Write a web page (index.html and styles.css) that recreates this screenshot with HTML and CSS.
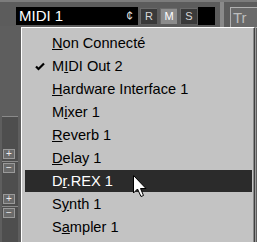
FILE: index.html
```html
<!DOCTYPE html>
<html>
<head>
<meta charset="utf-8">
<link rel="stylesheet" href="styles.css">
</head>
<body>
<div class="screen">
  <div class="edge"></div>
  <div class="rule"></div>
  <div class="main">
    <div class="topbar">
      <div class="field">MIDI 1</div>
      <div class="cent">¢</div>
      <div class="tbtn">R</div>
      <div class="tbtn on">M</div>
      <div class="tbtn">S</div>
      <div class="blk"></div>
      <div class="sep"></div>
      <div class="trbtn">Tr</div>
    </div>
    <div class="body">
      <div class="side">
        <div class="side-top"></div>
        <div class="row first">
          <div class="pm">+</div>
        </div>
        <div class="row">
          <div class="pm">−</div>
          <div class="pm">+</div>
        </div>
        <div class="row">
          <div class="pm">−</div>
          <div class="end"></div>
        </div>
      </div>
    </div>
  </div>

  <div class="menu">
    <div class="item"><span class="u">N</span>on Connecté</div>
    <div class="item"><svg class="check" width="10" height="9" viewBox="0 0 10 9"><path d="M1 4.5 L3.5 7 L9 1.5" fill="none" stroke="#000" stroke-width="2.2"/></svg>M<span class="u">I</span>DI Out 2</div>
    <div class="item"><span class="u">H</span>ardware Interface 1</div>
    <div class="item">M<span class="u">i</span>xer 1</div>
    <div class="item"><span class="u">R</span>everb 1</div>
    <div class="item"><span class="u">D</span>elay 1</div>
    <div class="item sel">D<span class="u">r</span>.REX 1</div>
    <div class="item">S<span class="u">y</span>nth 1</div>
    <div class="item">S<span class="u">a</span>mpler 1</div>
  </div>

  <svg class="cursor" width="15" height="25" viewBox="0 0 15 25">
    <path d="M0.5 0.5 L0.5 18 L4.5 14 L8 21.5 L10.5 20.5 L7.5 13.5 L13 13.5 Z" fill="#fff" stroke="#000" stroke-width="1"/>
  </svg>
</div>
</body>
</html>
```

FILE: styles.css
```css
html, body {
  margin: 0;
  padding: 0;
  background: #5e5e5e;
}
.screen {
  position: relative;
  width: 257px;
  height: 242px;
  overflow: hidden;
  display: flex;
  background: #5e5e5e;
  font-family: "Liberation Sans", Arial, sans-serif;
}
.edge {
  width: 3px;
  background: #7a7a7a;
}
.rule {
  width: 2px;
  background: #151515;
}
.main {
  flex: 1;
  display: flex;
  flex-direction: column;
}
.topbar {
  height: 26px;
  padding-top: 5px;
  box-sizing: border-box;
  display: flex;
  align-items: flex-start;
  border-top: 2px solid #7c7c7c;
  background: #5c5c5c;
}
.field {
  margin-left: 16px;
  width: 105px;
  height: 18px;
  background: #000;
  color: #fff;
  font-size: 15px;
  line-height: 18px;
  padding-left: 3px;
  box-sizing: border-box;
}
.cent {
  width: 17px;
  height: 18px;
  background: #000;
  color: #ddd;
  font-size: 12px;
  line-height: 18px;
  text-align: center;
}
.tbtn {
  width: 16px;
  height: 15px;
  margin: 1px 1px 0 2px;
  background: #3a3a3a;
  color: #d8d8d8;
  font-size: 11px;
  line-height: 15px;
  text-align: center;
  border-top: 1px solid #6a6a6a;
  border-left: 1px solid #6a6a6a;
}
.tbtn.on {
  background: #8c8c8c;
  color: #fff;
}
.blk {
  width: 17px;
  height: 18px;
  background: #000;
}
.sep {
  width: 4px;
  height: 26px;
  margin: -5px 5px 0 5px;
  background: #8a8a8a;
}
.trbtn {
  margin-left: 1px;
  width: 30px;
  height: 19px;
  border: 1px solid #b0b0b0;
  background: #6a6a6a;
  color: #bdbdbd;
  font-size: 15px;
  line-height: 19px;
  padding-left: 2px;
}
.body {
  flex: 1;
  display: flex;
}
.side {
  width: 16px;
  margin-left: 2px;
  display: flex;
  flex-direction: column;
}
.side-top {
  height: 90px;
}
.row {
  height: 45px;
  border-top: 1px solid #8a8a8a;
  background: #4e4e4e;
  display: flex;
  flex-direction: column;
  justify-content: space-between;
  padding: 1px 0 2px 0;
  box-sizing: border-box;
}
.row.first {
  justify-content: flex-end;
}
.pm {
  width: 10px;
  height: 8px;
  margin-left: 1px;
  background: #6a6a6a;
  border: 1px solid #9a9a9a;
  color: #eee;
  font-size: 10px;
  line-height: 8px;
  text-align: center;
}
.end {
  height: 4px;
  background: #000;
  margin-bottom: -2px;
}
.menu {
  position: absolute;
  left: 21px;
  top: 27px;
  width: 234px;
  height: 230px;
  background: #c3c3c3;
  border-top: 1px solid #fff;
  border-left: 1px solid #fff;
  border-right: 1px solid #404040;
  box-shadow: inset -1px 0 0 #8a8a8a, 1px 0 0 #9a9a9a;
  padding: 4px 2px 0 3px;
  box-sizing: border-box;
  font-size: 14.6px;
  color: #000;
}
.item {
  position: relative;
  height: 23px;
  line-height: 22px;
  padding-left: 27px;
  white-space: nowrap;
}
.item.sel {
  background: #2b2b2b;
  color: #fff;
  height: 22px;
  margin-bottom: 1px;
}
.u {
  text-decoration: underline;
}
.check {
  position: absolute;
  left: 10px;
  top: 7px;
}
.cursor {
  position: absolute;
  left: 133px;
  top: 175px;
}
```
